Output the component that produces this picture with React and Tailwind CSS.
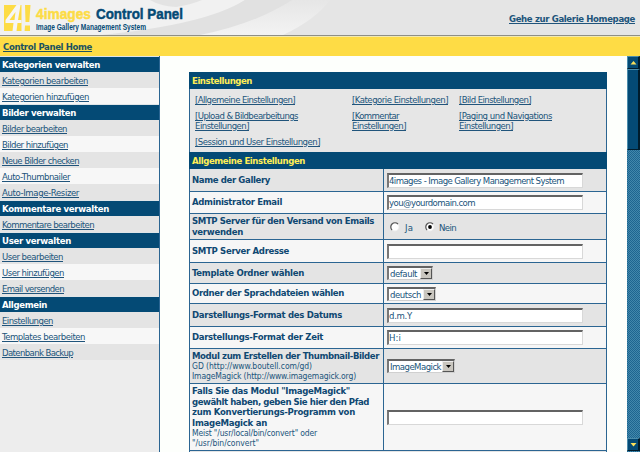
import { useLayoutEffect, useRef, useState } from "react";

// One line of text whose tracking is adjusted so that it fills the given width.
function Line({ w, className = "", children }) {
  const ref = useRef(null);
  const [spacing, setSpacing] = useState(0);
  useLayoutEffect(() => {
    const natural = ref.current.getBoundingClientRect().width;
    setSpacing((w - natural) / children.length);
  }, []);
  return (
    <span
      ref={ref}
      className={`inline-block whitespace-pre ${className}`}
      style={{ letterSpacing: `${spacing}px` }}
    >
      {children}
    </span>
  );
}

const menu = [
  { title: ["Kategorien verwalten", 98], items: [["Kategorien bearbeiten", 86], ["Kategorien hinzufügen", 87]] },
  {
    title: ["Bilder verwalten", 74],
    items: [["Bilder bearbeiten", 65], ["Bilder hinzufügen", 66], ["Neue Bilder checken", 77], ["Auto-Thumbnailer", 68], ["Auto-Image-Resizer", 77]],
  },
  { title: ["Kommentare verwalten", 107], items: [["Kommentare bearbeiten", 92]] },
  { title: ["User verwalten", 69], items: [["User bearbeiten", 61], ["User hinzufügen", 62], ["Email versenden", 62]] },
  { title: ["Allgemein", 45], items: [["Einstellungen", 51], ["Templates bearbeiten", 83], ["Datenbank Backup", 71]] },
];

function Sidebar() {
  return (
    <nav className="w-[160px] shrink-0 border-r border-[#2b6592] bg-[#ededed]">
      {menu.map((group) => (
        <div key={group.title[0]}>
          <div className="h-4 border-t border-[#dfe5e8] bg-[#044a75] pl-[2px] text-[9.5px] font-bold leading-[15px] text-white">
            <Line w={group.title[1]}>{group.title[0]}</Line>
          </div>
          {group.items.map(([label, w], i) => (
            <div key={label} className={`h-4 pl-[2px] leading-[17px] ${i % 2 ? "bg-[#f7f7f7]" : "bg-[#e4e4e4]"}`}>
              <Line w={w} className="underline">{label}</Line>
            </div>
          ))}
        </div>
      ))}
    </nav>
  );
}

function TextField({ value, w }) {
  return (
    <div className="h-[15px] w-[196px] border border-t-2 border-l-2 border-[#d8d8d8] border-t-[#636363] border-l-[#777] bg-white leading-[12px]">
      {value && <Line w={w}>{value}</Line>}
    </div>
  );
}

function SelectBox({ value, w, boxClass }) {
  return (
    <div className={`flex h-[14px] border border-t-2 border-l-2 border-[#d0d0d0] border-t-[#636363] border-l-[#777] bg-white pl-px leading-[11px] ${boxClass}`}>
      <Line w={w}>{value}</Line>
      <div className="ml-auto flex h-full w-3 items-center justify-center border border-[#eee] border-r-[#555] border-b-[#555] bg-[#c9c6bf]">
        <svg width="5" height="3" viewBox="0 0 5 3"><path d="M0 0h5L2.5 3z" fill="#000" /></svg>
      </div>
    </div>
  );
}

function Radio({ checked }) {
  return (
    <svg width="10" height="10" viewBox="0 0 10 10">
      <circle cx="5" cy="5" r="4.2" fill="#fff" stroke="#e6e6e6" strokeWidth="1" />
      <path d="M2 8A4.2 4.2 0 0 1 8 2" fill="none" stroke="#555" strokeWidth="1.2" />
      {checked && <circle cx="5" cy="5" r="1.9" fill="#000" />}
    </svg>
  );
}

function Row({ height, shade, label, note = [], children }) {
  return (
    <div className={`flex border-b border-[#2b6592] ${height} ${shade ? "bg-[#e4e4e4]" : "bg-[#f6f6f6]"}`}>
      <div className="flex w-[194px] shrink-0 flex-col justify-center border-r border-[#2b6592] pl-[2px]">
        {label.map(([text, w]) => (
          <div key={text} className="h-[10.5px] text-[9.5px] font-bold leading-[10.5px] text-[#0f4872]"><Line w={w}>{text}</Line></div>
        ))}
        {note.map(([text, w]) => (
          <div key={text} className="h-[10px] text-[8.5px] leading-[10px]"><Line w={w}>{text}</Line></div>
        ))}
      </div>
      <div className="flex items-center pl-[3px]">{children}</div>
    </div>
  );
}

function Bar({ children, w }) {
  return (
    <div className="h-[17px] bg-[#044a75] pl-[3px] text-[9.5px] font-bold leading-[17px] text-[#ffee55]">
      <Line w={w}>{children}</Line>
    </div>
  );
}

function Jump({ lines }) {
  return (
    <div className="leading-[10px]">
      {lines.map(([text, w]) => (
        <div key={text} className="h-[10px]"><Line w={w} className="underline">{text}</Line></div>
      ))}
    </div>
  );
}

function Settings() {
  return (
    <main className="mt-4 ml-[29px] w-[418px] shrink-0">
      <Bar w={60}>Einstellungen</Bar>
      <div className="grid h-[63px] grid-cols-[157px_107px_1fr] content-start gap-y-[6px] border-x border-[#2b6592] bg-[#e6e6e6] pt-[6px] pl-[5px]">
        <Jump lines={[["[Allgemeine Einstellungen]", 100]]} />
        <Jump lines={[["[Kategorie Einstellungen]", 96]]} />
        <Jump lines={[["[Bild Einstellungen]", 72]]} />
        <Jump lines={[["[Upload & Bildbearbeitungs", 103], ["Einstellungen]", 54]]} />
        <Jump lines={[["[Kommentar", 47], ["Einstellungen]", 54]]} />
        <Jump lines={[["[Paging und Navigations", 93], ["Einstellungen]", 54]]} />
        <Jump lines={[["[Session und User Einstellungen]", 125]]} />
      </div>
      <Bar w={113}>Allgemeine Einstellungen</Bar>
      <div className="border-x border-[#2b6592]">
        <Row height="h-[23px]" shade label={[["Name der Gallery", 78]]}>
          <TextField value="4images - Image Gallery Management System" w={175} />
        </Row>
        <Row height="h-[22px]" label={[["Administrator Email", 90]]}>
          <TextField value="you@yourdomain.com" w={86} />
        </Row>
        <Row height="h-[26px]" shade label={[["SMTP Server für den Versand von Emails", 182], ["verwenden", 51]]}>
          <div className="flex items-center pl-[3px]">
            <Radio />
            <div className="w-[25px] pt-[2px] pl-[5px] leading-3"><Line w={8}>Ja</Line></div>
            <Radio checked />
            <div className="pt-[2px] pl-[4px] leading-3"><Line w={17}>Nein</Line></div>
          </div>
        </Row>
        <Row height="h-[23px]" label={[["SMTP Server Adresse", 97]]}><TextField /></Row>
        <Row height="h-[21px]" shade label={[["Template Ordner wählen", 112]]}>
          <SelectBox value="default" w={27} boxClass="w-[46px]" />
        </Row>
        <Row height="h-[20px]" label={[["Ordner der Sprachdateien wählen", 152]]}>
          <SelectBox value="deutsch" w={31} boxClass="w-[49px]" />
        </Row>
        <Row height="h-[23px]" shade label={[["Darstellungs-Format des Datums", 150]]}>
          <TextField value="d.m.Y" w={23} />
        </Row>
        <Row height="h-[22px]" label={[["Darstellungs-Format der Zeit", 131]]}>
          <TextField value="H:i" w={12} />
        </Row>
        <Row
          height="h-[35px]"
          shade
          label={[["Modul zum Erstellen der Thumbnail-Bilder", 187]]}
          note={[["GD (http://www.boutell.com/gd)", 120], ["ImageMagick (http://www.imagemagick.org)", 164]]}
        >
          <SelectBox value="ImageMagick" w={51} boxClass="w-[68px]" />
        </Row>
        <Row
          height="h-[67px]"
          label={[
            ['Falls Sie das Modul "ImageMagick"', 158],
            ["gewählt haben, geben Sie hier den Pfad", 177],
            ["zum Konvertierungs-Programm von", 163],
            ["ImageMagick an", 75],
          ]}
          note={[['Meist "/usr/local/bin/convert" oder', 125], ['"/usr/bin/convert"', 67]]}
        >
          <TextField />
        </Row>
        <div className="h-1 bg-[#e4e4e4]" />
      </div>
    </main>
  );
}

function ScrollButton({ down }) {
  return (
    <div className="flex h-[13px] w-[13px] shrink-0 items-center justify-center border border-[#4b8dac] border-r-2 border-r-[#001c2c] border-b-[#001c2c] bg-[#044a75]">
      <svg width="7" height="4" viewBox="0 0 7 4">
        <path d={down ? "M0.5 0h6L3.5 3.5z" : "M0.5 3.5h6L3.5 0z"} fill="#fbe05a" />
      </svg>
    </div>
  );
}

function ScrollBar() {
  return (
    <div className="ml-auto flex w-[13px] flex-col bg-[#2b769d] bg-[repeating-conic-gradient(#1d6690_0_25%,#4287ab_0_50%)] bg-size-[2px_2px]">
      <ScrollButton />
      <div className="h-[81px] border border-r-2 border-[#4b8dac] border-r-[#001c2c] border-b-[#001c2c] bg-[#044a75]" />
      <div className="mt-auto mb-px"><ScrollButton down /></div>
    </div>
  );
}

function Header() {
  return (
    <header className="h-[37px] shrink-0 border-b border-[#f3e9b0] bg-[#e5e5e5]">
      <div className="flex h-full border-b border-[#8f8f85]">
        <svg width="480" height="35" viewBox="0 0 480 35">
          <defs>
            <linearGradient id="glow" x1="0" x2="0" y1="0" y2="1">
              <stop offset="0" stopColor="#e6e6e6" />
              <stop offset="1" stopColor="#f3f3f3" />
            </linearGradient>
          </defs>
          <path d="M0 0H330Q315 20 283 35H0z" fill="url(#glow)" />
          <path d="M0 0H245Q215 20 180 26L100 35H0z" fill="#f1f1f1" />
          <path d="M245 0H292Q255 24 200 35H100Q205 25 245 0z" fill="#e1e1e1" />
          <path d="M150 0H202Q190 5 176 7Q160 6 150 0z" fill="#e3e3e3" />
          <path d="M4 5H21.5V31H4z" fill="#fddc45" />
          <path d="M16.5 5L5.5 20V23H13.5L12.5 31H16.5L17.5 23H21.5V20H18L20.5 5zM15.5 12L14.5 20H9.5z" fill="#f6f6f6" />
          <path d="M25 5H30.5L29.3 22H25.5zM25 25.5H30V31H24.6z" fill="#fddc45" />
          <g fontFamily="'Liberation Sans Narrow','Liberation Sans',sans-serif" fontWeight="700">
            <text x="36" y="19" fontSize="15.5" fill="#fddc45" stroke="#fddc45" strokeWidth="0.5" textLength="55" lengthAdjust="spacingAndGlyphs">4images</text>
            <text x="96" y="19" fontSize="15.5" fill="#044a75" stroke="#044a75" strokeWidth="0.5" textLength="87" lengthAdjust="spacingAndGlyphs">Control Panel</text>
            <text x="36" y="29.5" fontSize="8.5" fill="#044a75" textLength="110" lengthAdjust="spacingAndGlyphs">Image Gallery Management System</text>
          </g>
        </svg>
        <div className="mt-[12px] ml-[29px] font-bold leading-[14px]">
          <Line w={126} className="underline">Gehe zur Galerie Homepage</Line>
        </div>
      </div>
    </header>
  );
}

export default function App() {
  return (
    <div className="flex h-[452px] w-[640px] flex-col overflow-hidden bg-[#fdfffc] font-['DejaVu_Sans_Condensed','DejaVu_Sans',sans-serif] text-[9.5px] text-[#20547b]">
      <Header />
      <div className="h-[19px] shrink-0 bg-[#fedc45] pl-[3px] font-bold leading-[19px] text-[#1d5360]">
        <Line w={89} className="underline">Control Panel Home</Line>
      </div>
      <div className="flex min-h-0 flex-1">
        <Sidebar />
        <Settings />
        <ScrollBar />
      </div>
    </div>
  );
}
